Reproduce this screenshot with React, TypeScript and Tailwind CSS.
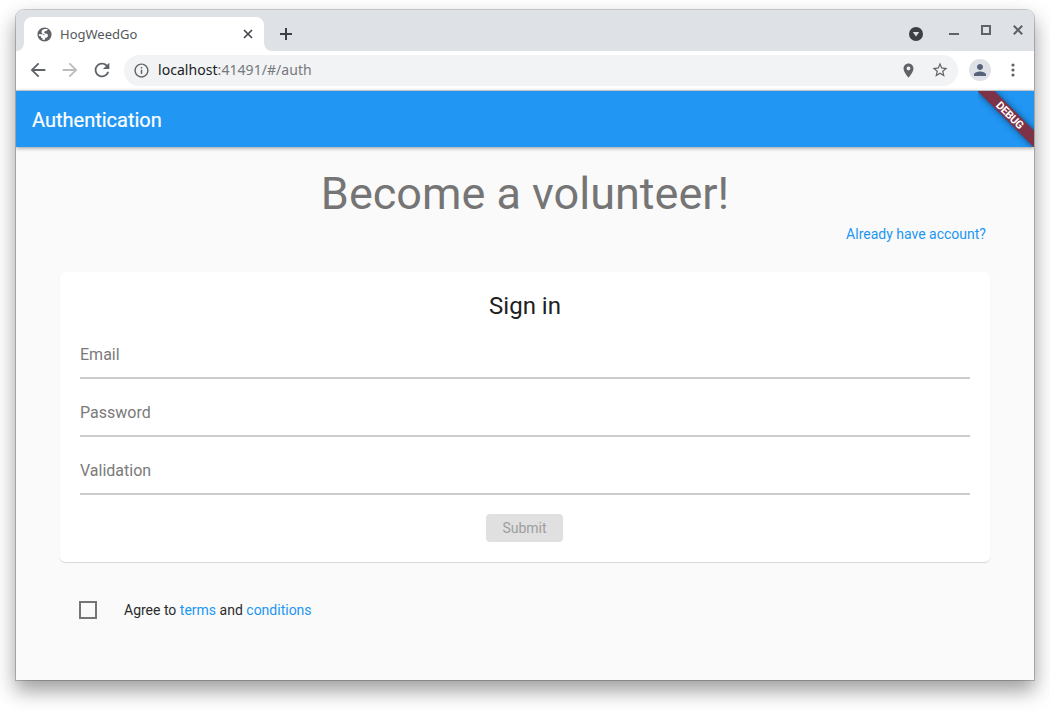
import type { ReactNode } from 'react';

function Icon({ d, className }: { d: string; className: string }) {
  return (
    <svg viewBox="0 0 24 24" fill="currentColor" fillRule="evenodd" className={'shrink-0 ' + className}>
      <path d={d} />
    </svg>
  );
}

const ICONS = {
  globe:
    'M12 2a10 10 0 1 0 0 20 10 10 0 0 0 0-20zM12 4.100h4.500c-.3 1.700-1.200 2.600-2.700 2.800-1.500.2-2.200.8-2.200 1.800 0 1.200.8 1.700 2.300 1.900 1.900.2 2.900 1.200 2.900 2.800 0 2.100-1.400 3.200-3.500 3.300l-1.300 3.200-2.900-.5v-2.400c-1.600 0-2.300-.7-2.300-1.900v-1H4.100v-2.500h4.200c1.600 0 2.400.6 2.600 1.600h1.800c-.2-1-.8-1.400-2-1.600-2-.3-2.800-1.300-2.800-3 0-2.300 1.500-4.100 4.100-4.500z',
  back: 'M20 11H7.83l5.59-5.59L12 4l-8 8 8 8 1.41-1.41L7.83 13H20v-2z',
  forward: 'M12 4l-1.41 1.41L16.17 11H4v2h12.17l-5.58 5.59L12 20l8-8z',
  reload:
    'M17.65 6.35C16.2 4.9 14.21 4 12 4c-4.42 0-7.99 3.58-7.99 8s3.57 8 7.99 8c3.73 0 6.84-2.55 7.73-6h-2.08c-.82 2.33-3.04 4-5.65 4-3.31 0-6-2.69-6-6s2.69-6 6-6c1.66 0 3.14.69 4.22 1.78L13 11h7V4l-2.35 2.35z',
  info: 'M11 7h2v2h-2zm0 4h2v6h-2zm1-9C6.48 2 2 6.48 2 12s4.48 10 10 10 10-4.48 10-10S17.52 2 12 2zm0 18c-4.41 0-8-3.59-8-8s3.59-8 8-8 8 3.59 8 8-3.59 8-8 8z',
  place:
    'M12 2C8.13 2 5 5.13 5 9c0 5.25 7 13 7 13s7-7.75 7-13c0-3.87-3.13-7-7-7zm0 9.5c-1.38 0-2.5-1.12-2.5-2.5s1.12-2.5 2.5-2.5 2.5 1.12 2.5 2.5-1.12 2.5-2.5 2.5z',
  star: 'M22 9.24l-7.19-.62L12 2 9.19 8.63 2 9.24l5.46 4.73L5.82 21 12 17.27 18.18 21l-1.63-7.03L22 9.24zM12 15.4l-3.76 2.27 1-4.28-3.32-2.88 4.38-.38L12 6.1l1.71 4.04 4.38.38-3.32 2.88 1 4.28L12 15.4z',
  person:
    'M12 12c2.21 0 4-1.79 4-4s-1.79-4-4-4-4 1.79-4 4 1.79 4 4 4zm0 2c-2.67 0-8 1.34-8 4v2h16v-2c0-2.66-5.33-4-8-4z',
};

function TabStrip() {
  return (
    <div className="flex h-[41px] bg-[#dee1e6] pl-2 pt-[7px]">
      <div className="relative flex w-60 items-center rounded-t-lg bg-white pl-[11.5px] pr-[9px]">
        <svg viewBox="0 0 8 8" className="absolute -left-2 bottom-0 size-2">
          <path d="M8 0v8H0a8 8 0 0 0 8-8z" fill="#fff" />
        </svg>
        <svg viewBox="0 0 8 8" className="absolute -right-2 bottom-0 size-2">
          <path d="M0 0v8h8a8 8 0 0 1-8-8z" fill="#fff" />
        </svg>
        <Icon d={ICONS.globe} className="size-[17px] text-[#5f6368]" />
        <span className="ml-[7.5px] flex-1 pt-px font-['Noto_Sans'] text-[13px] text-[#54585c]">HogWeedGo</span>
        <svg viewBox="0 0 14 14" className="size-[14px]" stroke="#45494d" strokeWidth="1.7">
          <path d="M3 3l8 8M11 3l-8 8" />
        </svg>
      </div>
      <svg viewBox="0 0 12 12" className="ml-4 mt-[11px] size-3" stroke="#3c4043" strokeWidth="2">
        <path d="M6 0v12M0 6h12" />
      </svg>
      <div className="ml-auto flex pr-[7px]">
        <svg viewBox="0 0 14 14" className="mr-[26px] mt-[10px] size-[14px]">
          <circle cx="7" cy="7" r="7" fill="#3c4043" />
          <path d="M3.8 5h6.4L7 9.5z" fill="#dee1e6" />
        </svg>
        <svg viewBox="0 0 78 16" className="mt-[5px] h-4 w-[78px]" fill="none" stroke="#5f6368" strokeWidth="2">
          <path d="M0 12h10" />
          <path d="M33 4h8v8h-8z" />
          <path d="M64.800 3.800l8.400 8.400M73.200 3.800L64.800 12.200" />
        </svg>
      </div>
    </div>
  );
}

function Toolbar() {
  return (
    <div className="flex h-10 items-center border-b border-[#d5d7da] bg-white pb-px pl-[11px] text-[#5f6368]">
      <Icon d={ICONS.back} className="size-[22px]" />
      <Icon d={ICONS.forward} className="ml-[10px] size-[22px] text-[#babcbe]" />
      <Icon d={ICONS.reload} className="ml-[10px] size-[22px]" />
      <div className="ml-[11px] flex h-[31px] w-[834px] items-center rounded-full bg-[#f1f3f4] pl-[9px] pr-[9px]">
        <Icon d={ICONS.info} className="size-[17px]" />
        <span className="ml-2 flex-1 font-['Noto_Sans'] text-sm tracking-[0.05px] text-[#75797d]">
          <span className="text-[#202124]">localhost</span>:41491/#/auth
        </span>
        <Icon d={ICONS.place} className="size-[17px]" />
        <Icon d={ICONS.star} className="ml-[14.5px] size-[18px]" />
      </div>
      <div className="ml-[11px] flex size-[22px] items-center justify-center rounded-full bg-[#dee1e6]">
        <Icon d={ICONS.person} className="size-[18px] text-[#56617a]" />
      </div>
      <svg viewBox="0 0 4 14" className="ml-[19.5px] h-[14px] w-1" fill="#5f6368">
        <circle cx="2" cy="2" r="1.6" />
        <circle cx="2" cy="7" r="1.6" />
        <circle cx="2" cy="12" r="1.6" />
      </svg>
    </div>
  );
}

function AppBar() {
  return (
    <header className="relative z-10 flex h-14 items-center bg-[#2196f3] px-4 shadow-[0_1px_4px_rgba(0,0,0,0.4)]">
      <h1 className="pt-[2px] text-xl font-normal text-white [-webkit-text-stroke:0.2px_#fff]">Authentication</h1>
      <div className="absolute right-0 top-0 size-14 overflow-hidden">
        <div className="absolute -right-4 top-[18px] flex h-3 w-20 rotate-45 items-center justify-center bg-[#7d3248] text-[11px] font-bold leading-none tracking-[-0.3px] text-white shadow-[0_0_6px_rgba(0,0,0,0.5)]">
          DEBUG
        </div>
      </div>
    </header>
  );
}

function Field({ label }: { label: string }) {
  return (
    <div className="h-[58px]">
      <div className="flex h-12 items-center border-b-2 border-[#cccccc] pt-[2px] text-base text-[#7a7a7a]">
        {label}
      </div>
    </div>
  );
}

function Link({ children }: { children: ReactNode }) {
  return <a className="text-[#2196f3]">{children}</a>;
}

export default function App() {
  return (
    <div className="h-[712px] w-[1050px] overflow-hidden bg-white px-[15px] pt-[9px] font-[Roboto,sans-serif]">
      <div className="flex h-[672px] flex-col overflow-hidden rounded-t-[9px] border border-black/20 border-t-[#c4c5c7] bg-[#fafafa] bg-clip-padding shadow-[0_10px_20px_rgba(0,0,0,0.38)]">
        <TabStrip />
        <Toolbar />
        <AppBar />
        <main className="flex flex-1 flex-col px-11 pt-[19px]">
          <h2 className="text-center text-[45px] leading-[56px] text-[#757575]">Become a volunteer!</h2>
          <div className="pr-1 pt-[2px] text-right text-sm leading-5">
            <Link>Already have account?</Link>
          </div>
          <section className="mt-7 h-[290px] rounded-[5px] bg-white px-5 pt-[18px] shadow-[0_1px_1px_rgba(0,0,0,0.14)]">
            <h3 className="mb-[9px] text-center text-2xl leading-8 text-[#212121]">Sign in</h3>
            <Field label="Email" />
            <Field label="Password" />
            <Field label="Validation" />
            <div className="flex justify-center pr-px pt-[9px]">
              <button className="h-7 w-[77px] rounded bg-[#e0e0e0] text-sm text-[#9e9e9e]">Submit</button>
            </div>
          </section>
          <div className="mt-[38px] flex items-center pl-[19px] text-sm text-[#2b2b2b]">
            <span className="size-[18px] border-2 border-[#757575]" />
            <p className="ml-[27px]">
              Agree to <Link>terms</Link> and <Link>conditions</Link>
            </p>
          </div>
        </main>
      </div>
    </div>
  );
}
